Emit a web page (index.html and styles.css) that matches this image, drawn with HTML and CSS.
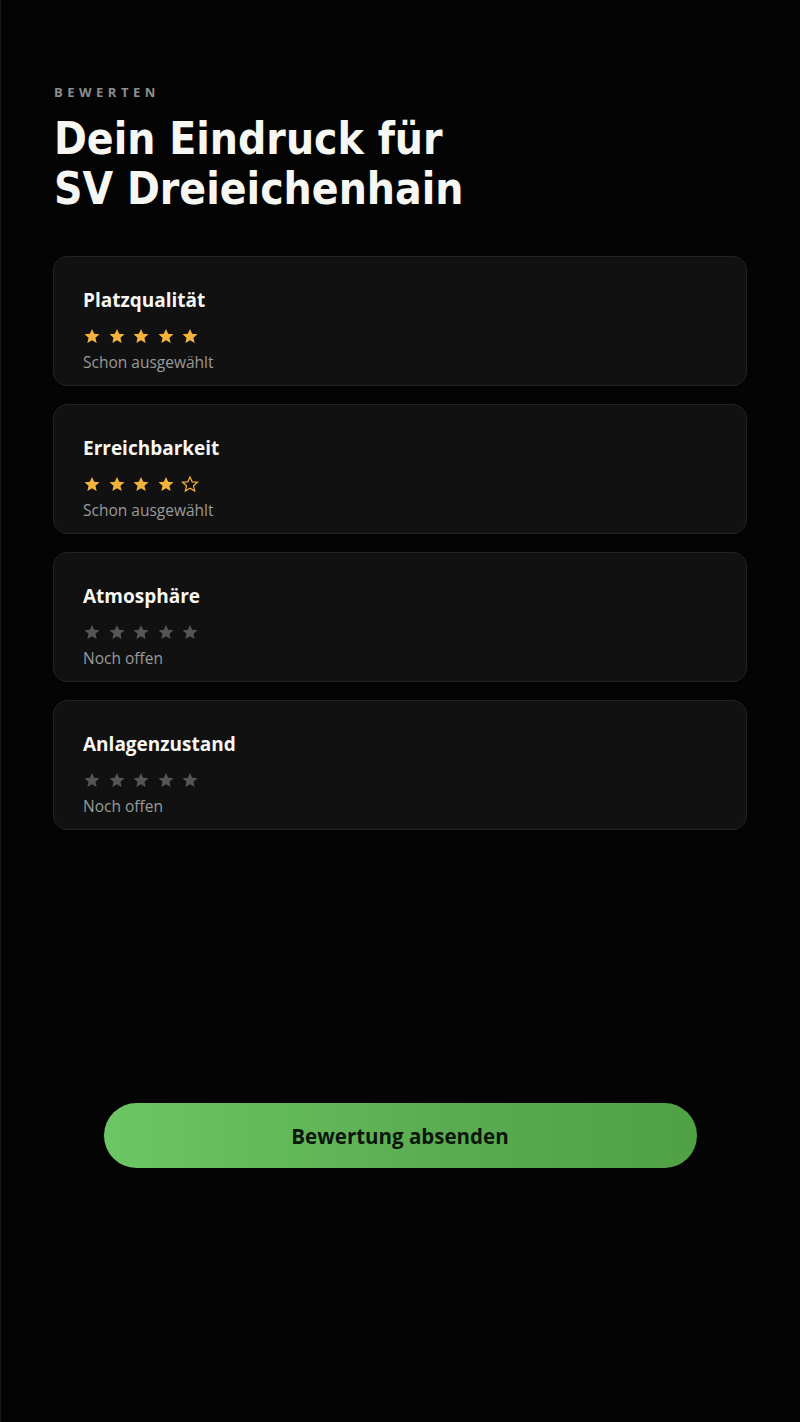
FILE: index.html
```html
<!DOCTYPE html>
<html lang="de">
<head>
  <meta charset="UTF-8" />
  <meta name="viewport" content="width=device-width, initial-scale=1.0"/>
  <title>Bewerten</title>
  <link rel="stylesheet" href="styles.css">
</head>
<body>

<main>
  <header class="intro">
    <p class="eyebrow">BEWERTEN</p>
    <h1>Dein Eindruck für<br>SV Dreieichenhain</h1>
  </header>

  <section class="ratings">
    <div class="card">
      <h2>Platzqualität</h2>
      <div class="stars gold">
        <svg viewBox="0 0 24 24"><path d="M12 2.5l2.9 6.6 7.1.6-5.4 4.7 1.6 7-6.2-3.7-6.2 3.7 1.6-7L2 9.7l7.1-.6z"/></svg>
        <svg viewBox="0 0 24 24"><path d="M12 2.5l2.9 6.6 7.1.6-5.4 4.7 1.6 7-6.2-3.7-6.2 3.7 1.6-7L2 9.7l7.1-.6z"/></svg>
        <svg viewBox="0 0 24 24"><path d="M12 2.5l2.9 6.6 7.1.6-5.4 4.7 1.6 7-6.2-3.7-6.2 3.7 1.6-7L2 9.7l7.1-.6z"/></svg>
        <svg viewBox="0 0 24 24"><path d="M12 2.5l2.9 6.6 7.1.6-5.4 4.7 1.6 7-6.2-3.7-6.2 3.7 1.6-7L2 9.7l7.1-.6z"/></svg>
        <svg viewBox="0 0 24 24"><path d="M12 2.5l2.9 6.6 7.1.6-5.4 4.7 1.6 7-6.2-3.7-6.2 3.7 1.6-7L2 9.7l7.1-.6z"/></svg>
      </div>
      <p class="state">Schon ausgewählt</p>
    </div>

    <div class="card">
      <h2>Erreichbarkeit</h2>
      <div class="stars gold">
        <svg viewBox="0 0 24 24"><path d="M12 2.5l2.9 6.6 7.1.6-5.4 4.7 1.6 7-6.2-3.7-6.2 3.7 1.6-7L2 9.7l7.1-.6z"/></svg>
        <svg viewBox="0 0 24 24"><path d="M12 2.5l2.9 6.6 7.1.6-5.4 4.7 1.6 7-6.2-3.7-6.2 3.7 1.6-7L2 9.7l7.1-.6z"/></svg>
        <svg viewBox="0 0 24 24"><path d="M12 2.5l2.9 6.6 7.1.6-5.4 4.7 1.6 7-6.2-3.7-6.2 3.7 1.6-7L2 9.7l7.1-.6z"/></svg>
        <svg viewBox="0 0 24 24"><path d="M12 2.5l2.9 6.6 7.1.6-5.4 4.7 1.6 7-6.2-3.7-6.2 3.7 1.6-7L2 9.7l7.1-.6z"/></svg>
        <svg class="outline" viewBox="0 0 24 24"><path d="M12 2.5l2.9 6.6 7.1.6-5.4 4.7 1.6 7-6.2-3.7-6.2 3.7 1.6-7L2 9.7l7.1-.6z"/></svg>
      </div>
      <p class="state">Schon ausgewählt</p>
    </div>

    <div class="card">
      <h2>Atmosphäre</h2>
      <div class="stars">
        <svg viewBox="0 0 24 24"><path d="M12 2.5l2.9 6.6 7.1.6-5.4 4.7 1.6 7-6.2-3.7-6.2 3.7 1.6-7L2 9.7l7.1-.6z"/></svg>
        <svg viewBox="0 0 24 24"><path d="M12 2.5l2.9 6.6 7.1.6-5.4 4.7 1.6 7-6.2-3.7-6.2 3.7 1.6-7L2 9.7l7.1-.6z"/></svg>
        <svg viewBox="0 0 24 24"><path d="M12 2.5l2.9 6.6 7.1.6-5.4 4.7 1.6 7-6.2-3.7-6.2 3.7 1.6-7L2 9.7l7.1-.6z"/></svg>
        <svg viewBox="0 0 24 24"><path d="M12 2.5l2.9 6.6 7.1.6-5.4 4.7 1.6 7-6.2-3.7-6.2 3.7 1.6-7L2 9.7l7.1-.6z"/></svg>
        <svg viewBox="0 0 24 24"><path d="M12 2.5l2.9 6.6 7.1.6-5.4 4.7 1.6 7-6.2-3.7-6.2 3.7 1.6-7L2 9.7l7.1-.6z"/></svg>
      </div>
      <p class="state">Noch offen</p>
    </div>

    <div class="card">
      <h2>Anlagenzustand</h2>
      <div class="stars">
        <svg viewBox="0 0 24 24"><path d="M12 2.5l2.9 6.6 7.1.6-5.4 4.7 1.6 7-6.2-3.7-6.2 3.7 1.6-7L2 9.7l7.1-.6z"/></svg>
        <svg viewBox="0 0 24 24"><path d="M12 2.5l2.9 6.6 7.1.6-5.4 4.7 1.6 7-6.2-3.7-6.2 3.7 1.6-7L2 9.7l7.1-.6z"/></svg>
        <svg viewBox="0 0 24 24"><path d="M12 2.5l2.9 6.6 7.1.6-5.4 4.7 1.6 7-6.2-3.7-6.2 3.7 1.6-7L2 9.7l7.1-.6z"/></svg>
        <svg viewBox="0 0 24 24"><path d="M12 2.5l2.9 6.6 7.1.6-5.4 4.7 1.6 7-6.2-3.7-6.2 3.7 1.6-7L2 9.7l7.1-.6z"/></svg>
        <svg viewBox="0 0 24 24"><path d="M12 2.5l2.9 6.6 7.1.6-5.4 4.7 1.6 7-6.2-3.7-6.2 3.7 1.6-7L2 9.7l7.1-.6z"/></svg>
      </div>
      <p class="state">Noch offen</p>
    </div>
  </section>

  <div class="actions">
    <button type="button">Bewertung absenden</button>
  </div>
</main>

</body>
</html>
```

FILE: styles.css
```css
  body {
    margin: 0;
    background-color: #040404;
    font-family: "Open Sans", "Noto Sans", sans-serif;
    color: #f4f4f0;
    min-height: 100vh;
    border-left: 1px solid #161616;
    box-sizing: border-box;
  }

  main {
    padding: 84px 53px 0 52px;
  }

  .eyebrow {
    margin: 0;
    padding-left: 1px;
    font-size: 13px;
    font-weight: 700;
    letter-spacing: 4.5px;
    color: #8d8d8d;
    line-height: 17px;
  }

  h1 {
    margin: 13px 0 0 0;
    padding-left: 1px;
    font-family: "DejaVu Sans Condensed", "DejaVu Sans", sans-serif;
    font-stretch: condensed;
    font-size: 44px;
    font-weight: 700;
    line-height: 50px;
    color: #f6f6f2;
  }

  .ratings {
    margin-top: 42px;
    display: flex;
    flex-direction: column;
    gap: 18px;
  }

  .card {
    background-color: #111111;
    border: 1px solid #232323;
    border-radius: 14px;
    height: 130px;
    box-sizing: border-box;
    padding: 29px 29px 0 29px;
  }

  .card h2 {
    margin: 0;
    font-size: 19px;
    font-weight: 700;
    line-height: 28px;
    color: #f7f7f3;
  }

  .stars {
    display: flex;
    gap: 6.5px;
    margin-top: 13px;
    height: 18px;
    align-items: center;
  }

  .stars svg {
    width: 18px;
    height: 18px;
    fill: #555555;
  }

  .stars.gold svg {
    fill: #f4b43c;
  }

  .stars.gold svg.outline {
    fill: none;
    stroke: #f4b43c;
    stroke-width: 1.6;
  }

  .state {
    margin: 7px 0 0 0;
    font-size: 15.5px;
    line-height: 20px;
    color: #9a9a9a;
  }

  .actions {
    margin-top: 273px;
    display: flex;
    justify-content: center;
  }

  button {
    width: 593px;
    height: 65px;
    border: none;
    border-radius: 33px;
    background: linear-gradient(90deg, #6cc663 0%, #5cad52 55%, #50a146 100%);
    font-family: "Open Sans", "Noto Sans", sans-serif;
    font-size: 20.5px;
    font-weight: 700;
    color: #0b160a;
    cursor: pointer;
  }
```
